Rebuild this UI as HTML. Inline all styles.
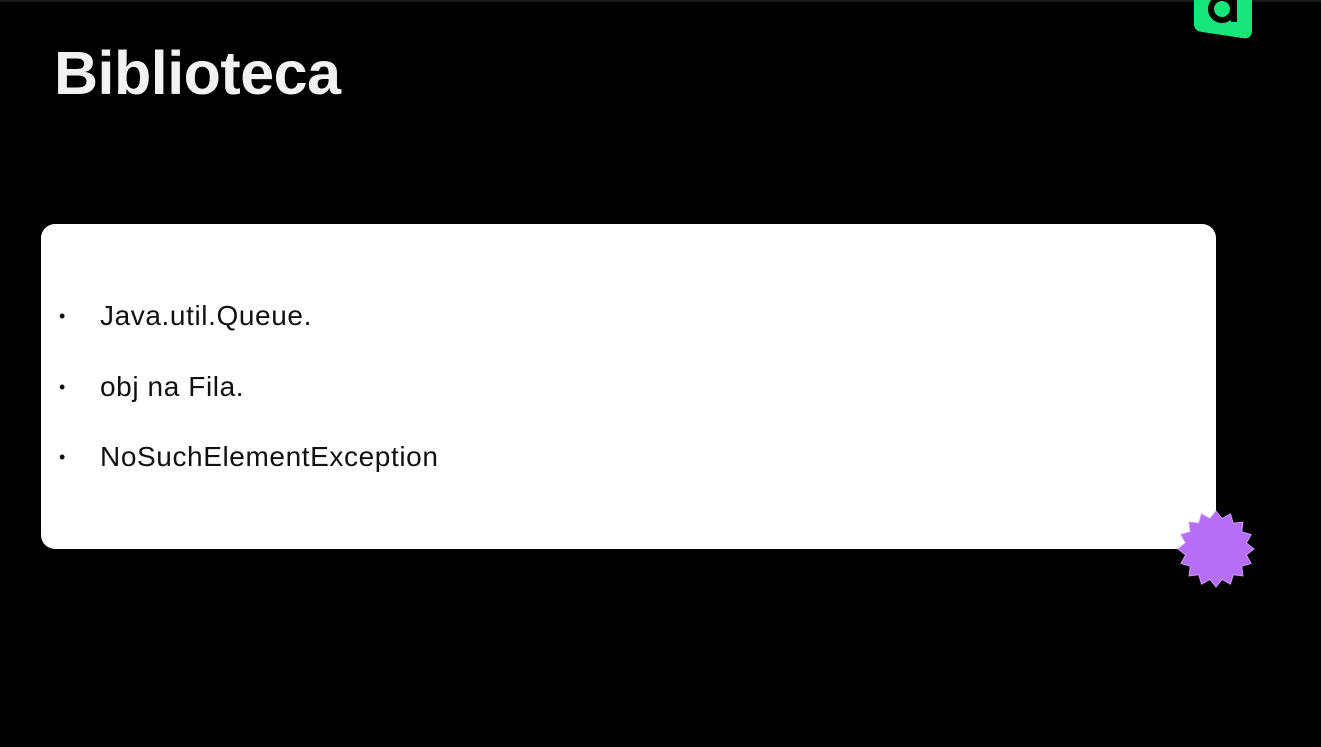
<!DOCTYPE html>
<html><head><meta charset="utf-8"><style>
html,body{margin:0;padding:0;background:#000;width:1321px;height:747px;overflow:hidden;position:relative;font-family:"Liberation Sans",Arial,sans-serif}
.topline{position:absolute;left:0;top:0;width:1321px;height:2px;background:#1a1a1a}
h1{position:absolute;left:54px;top:38px;margin:0;font-size:61px;font-weight:bold;color:#f2f2f2;letter-spacing:-0.5px}
.card{position:absolute;left:41px;top:224px;width:1175px;height:325px;background:#fff;border-radius:14px}
.item{position:absolute;left:59px;font-size:28px;color:#111}
.item span.b{position:absolute;left:0;top:0;font-size:18px;line-height:34px}
.item span.t{position:absolute;left:41px;top:0;white-space:nowrap;line-height:34px;letter-spacing:0.6px}
</style></head><body>
<div class="topline"></div>
<svg style="position:absolute;left:1190px;top:0" width="66" height="42">
<path d="M4 0 H62 V30 Q62 40 52 38 L12 32 Q4 31 4 24 Z" fill="#16e67a"/>
<circle cx="32" cy="9" r="11" fill="none" stroke="#000" stroke-width="6"/>
<rect x="41" y="0" width="6" height="22" fill="#000"/>
</svg>
<h1>Biblioteca</h1>
<div class="card"></div>
<div class="item" style="top:299px"><span class="b">•</span><span class="t">Java.util.Queue.</span></div>
<div class="item" style="top:370px"><span class="b">•</span><span class="t">obj na Fila.</span></div>
<div class="item" style="top:440px"><span class="b">•</span><span class="t">NoSuchElementException</span></div>
<svg style="position:absolute;left:1176px;top:509px" width="80" height="80"><polygon id="st" fill="#b56ef5" stroke="#c89cf7" stroke-width="1"/></svg>
<script>
var p=[],n=16;for(var i=0;i<2*n;i++){var r=i%2?31:38,a=Math.PI*i/n;p.push((40+r*Math.cos(a)).toFixed(1)+","+(40+r*Math.sin(a)).toFixed(1));}
document.getElementById("st").setAttribute("points",p.join(" "));
</script>
</body></html>
